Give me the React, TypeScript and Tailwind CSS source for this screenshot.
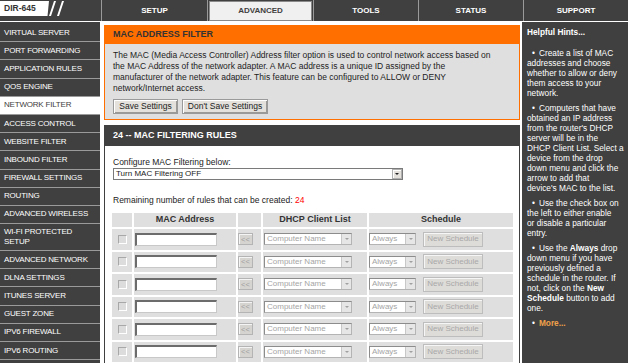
import React from 'react';

const sideItems = [
  'VIRTUAL SERVER',
  'PORT FORWARDING',
  'APPLICATION RULES',
  'QOS ENGINE',
  'NETWORK FILTER',
  'ACCESS CONTROL',
  'WEBSITE FILTER',
  'INBOUND FILTER',
  'FIREWALL SETTINGS',
  'ROUTING',
  'ADVANCED WIRELESS',
  'WI-FI PROTECTED\nSETUP',
  'ADVANCED NETWORK',
  'DLNA SETTINGS',
  'ITUNES SERVER',
  'GUEST ZONE',
  'IPV6 FIREWALL',
  'IPV6 ROUTING',
];

const tabs = [
  { label: 'SETUP', w: 'w-[106px]' },
  { label: 'ADVANCED', w: 'w-[106px]', active: true },
  { label: 'TOOLS', w: 'w-[105px]' },
  { label: 'STATUS', w: 'w-[105px]' },
  { label: 'SUPPORT', w: 'w-[105px]' },
];

const btn =
  'h-[15px] flex items-center justify-center whitespace-nowrap text-[8.5px] leading-none text-[#222] bg-[#e4e1dc] border border-[#9a9a9a] shadow-[inset_1px_1px_#fff,inset_-1px_-1px_#9c9a96]';

const DisabledSelect: React.FC<{ label: string; w: string }> = ({ label, w }) => (
  <div className={`${w} h-[12px] flex items-center bg-white border border-[#b4b4b4] border-t-[#8c8c8c] border-l-[#8c8c8c]`}>
    <span className="flex-1 pl-[2px] text-[8px] leading-none text-[#a5a5a5] truncate">{label}</span>
    <span className="w-[10px] h-[10px] flex items-center justify-center bg-[#e6e6e6] border-l border-[#c8c8c8]">
      <span className="w-0 h-0 border-x-[2px] border-x-transparent border-t-[2px] border-t-[#a0a0a0]" />
    </span>
  </div>
);

const RuleRow: React.FC = () => (
  <tr className="h-[20.5px]">
    <td className="bg-[#dfdfdf] w-[20px]">
      <div className="mx-auto w-[9px] h-[9px] bg-[#dcdcdc] border border-[#a8a8a8] border-b-white border-r-white" />
    </td>
    <td className="bg-[#dfdfdf] w-[102px]">
      <div className="ml-[1px] w-[82px] h-[13px] bg-white border border-[#c8c8c8] border-t-[#6c6c6c] border-l-[#6c6c6c] border-t-2 border-l-2" />
    </td>
    <td className="bg-[#dfdfdf] w-[23px]">
      <div className="w-[15px] h-[12px] flex items-center justify-center text-[7.5px] leading-none text-[#a0a0a0] bg-[#d6d4d0] border border-[#b4b4b4] shadow-[inset_1px_1px_#f4f4f4]">
        &lt;&lt;
      </div>
    </td>
    <td className="bg-[#dfdfdf] w-[104px]">
      <div className="ml-[1px]">
        <DisabledSelect label="Computer Name" w="w-[88px]" />
      </div>
    </td>
    <td className="bg-[#dfdfdf] w-[144px]">
      <div className="flex items-center gap-[7px]">
        <DisabledSelect label="Always" w="w-[47px]" />
        <div className="w-[60px] h-[15px] flex items-center justify-center whitespace-nowrap text-[8px] leading-none text-[#a8a8a8] bg-[#dedcd8] border border-[#bdbdbd] shadow-[inset_1px_1px_#f6f6f6]">
          New Schedule
        </div>
      </div>
    </td>
  </tr>
);

export default function App() {
  return (
    <div className="w-[628px] h-[363px] overflow-hidden bg-white font-['Liberation_Sans',Arial,sans-serif] text-[#222]">
      {/* top bar */}
      <div className="flex h-[22px] bg-[#404040] border-b border-white">
        <div className="w-[101px] flex items-start pt-[1px]">
          <div className="w-[49px] h-[15px] bg-white flex items-center pl-[4px] text-[8.5px] font-bold text-[#333] [clip-path:polygon(0_0,100%_0,97%_100%,0_100%)]">
            DIR-645
          </div>
          <svg width="20" height="16" viewBox="0 0 20 16">
            <polygon points="5,0 7,0 2,15 0,15" fill="#fff" />
            <polygon points="13,0 15,0 10,15 8,15" fill="#fff" />
          </svg>
        </div>
        {tabs.map((t) => (
          <div key={t.label} className={`${t.w} h-[21px] border-l border-[#9a9a9a] flex`}>
            {t.active ? (
              <div className="flex-1 m-[1px] mb-[0px] bg-[#f0f0f0] border border-[#8a8a8a] flex items-center justify-center text-[8px] font-bold text-[#404040]">
                {t.label}
              </div>
            ) : (
              <div className="flex-1 flex items-center justify-center text-[8px] font-bold text-white">{t.label}</div>
            )}
          </div>
        ))}
      </div>

      <div className="flex">
        {/* sidebar */}
        <div className="w-[100px] h-[341px] bg-[#404040] pt-[2px]">
          {sideItems.map((s) => {
            const active = s === 'NETWORK FILTER';
            const two = s.includes('\n');
            return (
              <div
                key={s}
                className={`${two ? 'h-[27px]' : 'h-[18.2px]'} flex items-center pl-[4px] border-b border-[#9a9a9a] whitespace-pre-line text-[8px] leading-[10px] tracking-[-0.2px] ${
                  active ? 'bg-white text-[#404040]' : 'text-white'
                }`}
              >
                {s}
              </div>
            );
          })}
        </div>

        {/* main */}
        <div className="w-[416px] ml-[4px] pt-[3px]">
          <div className="border border-[#ff6f00]">
            <div className="h-[18px] bg-[#ff6f00] flex items-center pl-[8px] text-[9px] font-bold text-[#333]">
              MAC ADDRESS FILTER
            </div>
            <div className="bg-[#dfdfdf] px-[8px] pt-[6px] pb-[5px]">
              <p className="text-[8.5px] leading-[11px] text-[#222] whitespace-nowrap">
                The MAC (Media Access Controller) Address filter option is used to control network access based on
                <br />
                the MAC Address of the network adapter. A MAC address is a unique ID assigned by the
                <br />
                manufacturer of the network adapter. This feature can be configured to ALLOW or DENY
                <br />
                network/Internet access.
              </p>
              <div className="flex gap-[4px] mt-[5px]">
                <button className={`${btn} w-[65px]`}>Save Settings</button>
                <button className={`${btn} w-[86px]`}>Don't Save Settings</button>
              </div>
            </div>
          </div>

          <div className="mt-[5px]">
            <div className="h-[21px] bg-[#404040] flex items-center pl-[9px] text-[9px] font-bold text-white">
              24 -- MAC FILTERING RULES
            </div>
            <div className="h-[250px] border-x border-[#404040] pl-[5px] pt-[11px]">
              <div className="pl-[3px]">
                <div className="text-[8.5px] leading-[11px]">Configure MAC Filtering below:</div>
                <div className="w-[290px] h-[12px] flex items-center bg-white border border-[#7a7a7a]">
                  <span className="flex-1 pl-[2px] text-[8px] leading-none text-[#222]">Turn MAC Filtering OFF</span>
                  <span className="w-[10px] h-[10px] flex items-center justify-center bg-[#e4e1dc] border border-[#b0b0b0] shadow-[inset_1px_1px_#fff]">
                    <span className="w-0 h-0 border-x-[2px] border-x-transparent border-t-[2px] border-t-[#222]" />
                  </span>
                </div>
                <div className="mt-[15px] text-[8.5px] leading-[11px]">
                  Remaining number of rules that can be created: <span className="text-[#ff0000]">24</span>
                </div>
              </div>
              <table className="mt-[5px] border-separate border-spacing-[2px]">
                <thead>
                  <tr className="h-[14px] text-[9px] font-bold text-[#333]">
                    <th className="bg-[#dfdfdf] w-[20px]" />
                    <th className="bg-[#dfdfdf] w-[102px]">MAC Address</th>
                    <th className="bg-[#dfdfdf] w-[23px]" />
                    <th className="bg-[#dfdfdf] w-[104px]">DHCP Client List</th>
                    <th className="bg-[#dfdfdf] w-[144px]">Schedule</th>
                  </tr>
                </thead>
                <tbody>
                  {[0, 1, 2, 3, 4, 5].map((i) => (
                    <RuleRow key={i} />
                  ))}
                </tbody>
              </table>
            </div>
          </div>
        </div>

        {/* hints */}
        <div className="w-[106px] ml-[2px] h-[341px] bg-[#404040] pl-[5px] pt-[5px] text-white text-[8.3px] leading-[10px] whitespace-nowrap">
          <div className="font-bold">Helpful Hints...</div>
          <p className="mt-[11px]">
            <span className="ml-[5px] mr-[4px]">•</span>Create a list of MAC
            <br />
            addresses and choose
            <br />
            whether to allow or deny
            <br />
            them access to your
            <br />
            network.
          </p>
          <p className="mt-[5px]">
            <span className="ml-[5px] mr-[4px]">•</span>Computers that have
            <br />
            obtained an IP address
            <br />
            from the router's DHCP
            <br />
            server will be in the
            <br />
            DHCP Client List. Select a
            <br />
            device from the drop
            <br />
            down menu and click the
            <br />
            arrow to add that
            <br />
            device's MAC to the list.
          </p>
          <p className="mt-[5px]">
            <span className="ml-[5px] mr-[4px]">•</span>Use the check box on
            <br />
            the left to either enable
            <br />
            or disable a particular
            <br />
            entry.
          </p>
          <p className="mt-[5px]">
            <span className="ml-[5px] mr-[4px]">•</span>Use the <b>Always</b> drop
            <br />
            down menu if you have
            <br />
            previously defined a
            <br />
            schedule in the router. If
            <br />
            not, click on the <b>New</b>
            <br />
            <b>Schedule</b> button to add
            <br />
            one.
          </p>
          <p className="mt-[5px]">
            <span className="ml-[5px] mr-[4px]">•</span>
            <b className="text-[#f0a04a]">More...</b>
          </p>
        </div>
      </div>
    </div>
  );
}
